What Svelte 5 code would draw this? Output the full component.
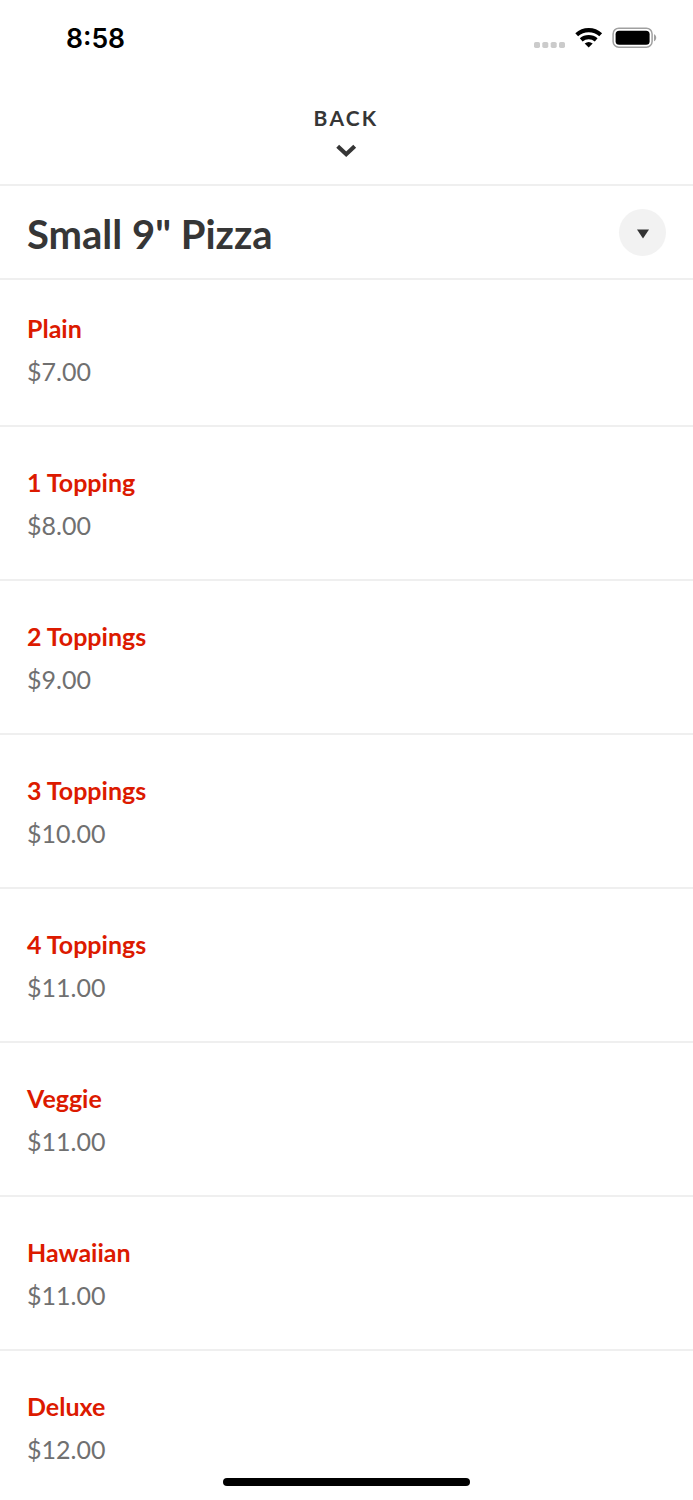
<script>
  const items = [
    ['Plain', '$7.00'],
    ['1 Topping', '$8.00'],
    ['2 Toppings', '$9.00'],
    ['3 Toppings', '$10.00'],
    ['4 Toppings', '$11.00'],
    ['Veggie', '$11.00'],
    ['Hawaiian', '$11.00'],
    ['Deluxe', '$12.00'],
  ];
</script>

<div class="screen">
  <header class="status">
    <span class="time">8:58</span>
    <svg class="indicators" width="126" height="26" viewBox="0 0 126 26">
      <g fill="#cbcbcb">
        <rect x="1" y="16.900" width="6" height="6" rx="1.700" />
        <rect x="9.3" y="16.900" width="6" height="6" rx="1.700" />
        <rect x="17.7" y="16.900" width="6" height="6" rx="1.700" />
        <rect x="26" y="16.900" width="6" height="6" rx="1.700" />
      </g>
      <g fill="none" stroke="#000" stroke-width="4.200">
        <path d="M43.700 9.800a18 18 0 0 1 24 0" />
        <path d="M48.200 14.900a11.400 11.400 0 0 1 15 0" />
      </g>
      <path d="M51.700 18.600a6.300 6.300 0 0 1 8 0L55.700 22.600z" />
      <rect x="80.1" y="3.2" width="39" height="19" rx="5.700" fill="none" stroke="#a0a0a0" stroke-width="1.5" />
      <rect x="82.600" y="5.700" width="34" height="14" rx="3.500" />
      <path d="M121 9.200c3 1.200 3 5.800 0 7z" fill="#a0a0a0" />
    </svg>
  </header>
  <button class="back">
    <span>BACK</span>
    <svg width="22" height="16" viewBox="0 0 22 16"><path d="M2.700 3.300l8.500 7.900 8.500-7.900" fill="none" stroke="#363636" stroke-width="4.200" /></svg>
  </button>
  <div class="title">
    <h1>Small 9" Pizza</h1>
    <button class="toggle" aria-label="Toggle section">
      <svg width="12" height="10" viewBox="0 0 12 10"><path d="M0 .5h12L6 9.500z" fill="#333" /></svg>
    </button>
  </div>
  <main>
    {#each items as [name, price]}
      <div class="item">
        <h2>{name}</h2>
        <p>{price}</p>
      </div>
    {/each}
  </main>
  <div class="home"></div>
</div>

<style>
  :global(body) { margin: 0; background: #fff; }
  .screen { position: relative; width: 693px; height: 1500px; overflow: hidden; background: #fff; color: #363636; font-family: Lato, sans-serif; }
  .status { height: 76px; box-sizing: border-box; padding: 25px 34px 0 66px; display: flex; justify-content: space-between; align-items: flex-start; }
  .time { margin-top: -1px; font: 600 26.5px/28px Inter, sans-serif; color: #000; }
  button { border: 0; padding: 0; font: inherit; color: inherit; }
  .back { width: 100%; height: 110px; box-sizing: border-box; background: none; border-bottom: 2px solid #efefef; display: flex; flex-direction: column; align-items: center; padding-top: 30px; }
  .back span { font-size: 21px; line-height: 24px; font-weight: 700; letter-spacing: 2.2px; margin-right: 1px; }
  .back svg { margin: 13px 2px 0 0; }
  .title { height: 94px; box-sizing: border-box; padding: 0 27px; border-bottom: 2px solid #efefef; display: flex; justify-content: space-between; align-items: center; }
  h1 { margin: 3px 0 0; font-size: 40px; line-height: 50px; font-weight: 700; }
  .toggle { width: 47px; height: 47px; border-radius: 50%; background: #f2f2f2; display: grid; place-items: center; }
  .toggle svg { position: relative; top: 2px; }
  .item { height: 154px; box-sizing: border-box; padding: 39px 27px 0; border-bottom: 2px solid #efefef; }
  .item:first-child { height: 147px; padding-top: 32px; }
  h2 { margin: 0; font-size: 25px; line-height: 32px; font-weight: 700; color: #dc1a00; }
  p { margin: 11px 0 0; font-size: 25px; line-height: 32px; color: #707070; }
  .home { position: absolute; left: 223px; top: 1478px; width: 247px; height: 8px; border-radius: 4px; background: #000; }
</style>
